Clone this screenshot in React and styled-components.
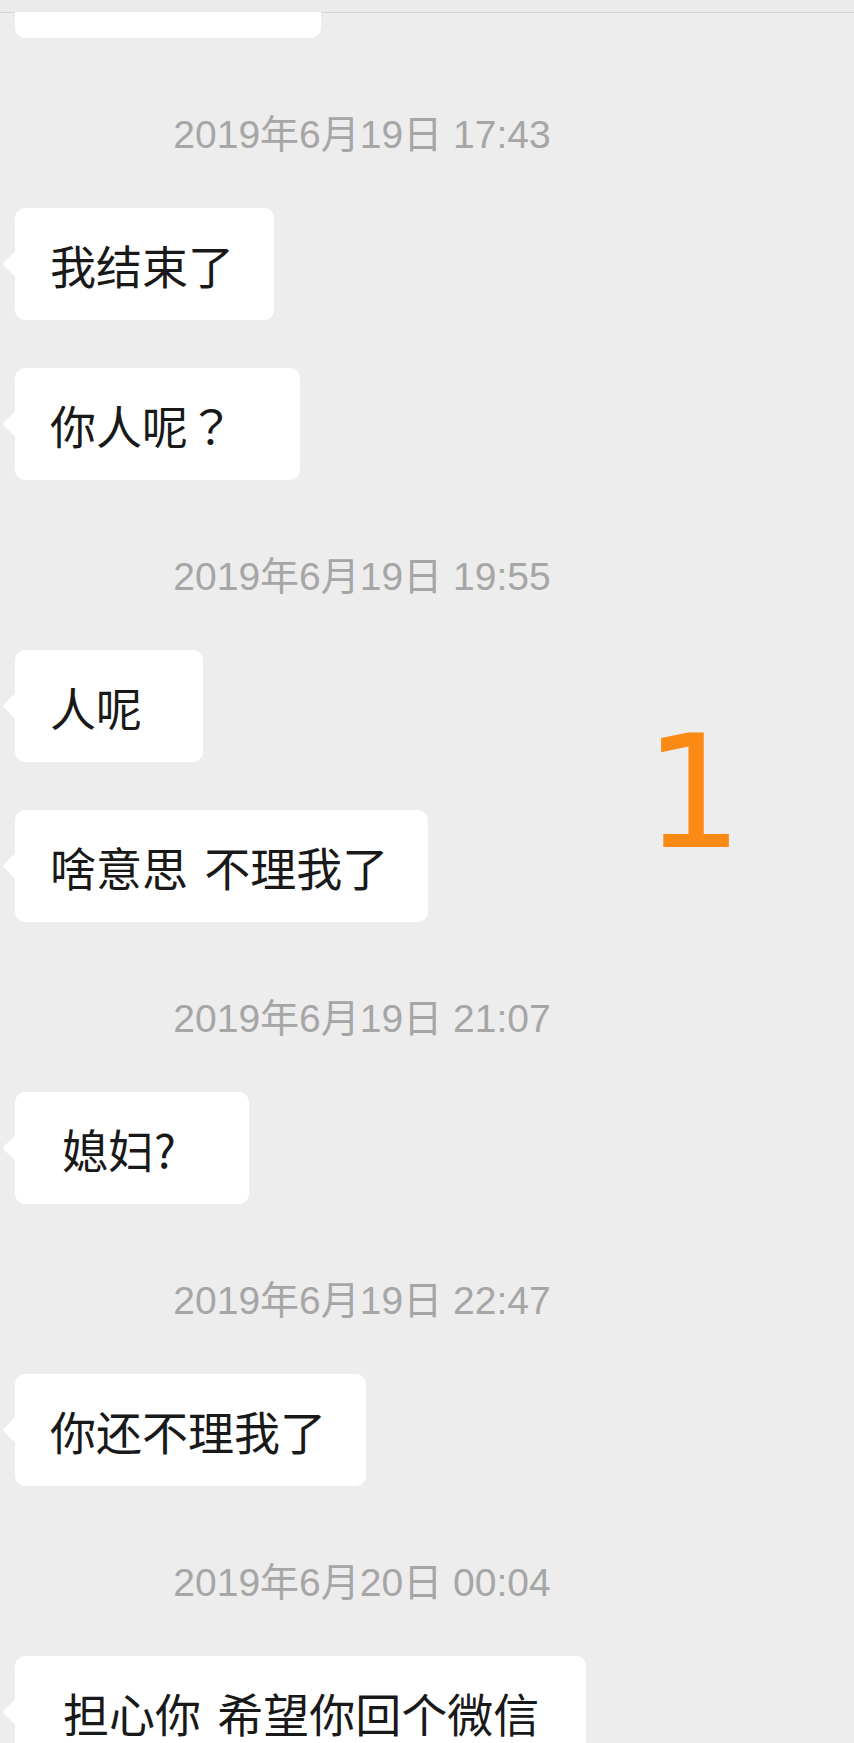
import styled, { createGlobalStyle } from 'styled-components';

const GlobalStyle = createGlobalStyle`
    html, body {
        margin: 0;
        padding: 0;
        background: #ededed;
    }
    body {
        height: 1743px;
        overflow: hidden;
    }
`;

const Page = styled.div`
    position: relative;
    width: 854px;
    height: 1743px;
    overflow: hidden;
    background-color: #ededed;
    font-family: "Noto Sans CJK SC", "Noto Sans", sans-serif;
`;

const TopStrip = styled.div`
    height: 12px;
    background-color: #eaeaea;
    border-bottom: 1px solid #d3d3d3;
`;

const Chat = styled.div`
    display: flex;
    flex-direction: column;
    align-items: flex-start;
`;

const CutBubble = styled.div`
    width: 306px;
    height: 26px;
    margin-left: 15px;
    margin-top: -1px;
    background-color: #fff;
    border-radius: 0 0 10px 10px;
`;

const Time = styled.div`
    align-self: stretch;
    height: 40px;
    line-height: 40px;
    margin: 77px 0 53px;
    padding-right: 130px;
    text-align: center;
    font-family: "Liberation Sans", "Noto Sans CJK SC", sans-serif;
    font-size: 39px;
    color: #a6a6a6;
    white-space: nowrap;
`;

const Bubble = styled.div`
    position: relative;
    box-sizing: border-box;
    height: 112px;
    line-height: 112px;
    min-width: ${p => p.$min || 0}px;
    margin-left: 15px;
    padding: 0 40px 0 ${p => p.$indent || 35}px;
    background-color: #fff;
    border-radius: 10px;
    font-size: 46px;
    color: #191919;
    white-space: nowrap;
    word-spacing: 6px;

    & + & {
        margin-top: 48px;
    }

    &::before {
        content: "";
        position: absolute;
        left: -9px;
        top: 47px;
        width: 18px;
        height: 18px;
        background-color: #fff;
        border-radius: 3px;
        transform: rotate(45deg);
    }
`;

const Punct = styled.span`
    font-family: "Noto Sans CJK TC", "Noto Sans CJK SC", sans-serif;
`;

const Mark = styled.div`
    position: absolute;
    left: 644px;
    top: 715px;
    font-family: "DejaVu Sans", sans-serif;
    font-size: 156px;
    line-height: 1;
    color: #fa8a14;
`;

const messages = [
    { time: '2019年6月19日 17:43' },
    { text: '我结束了' },
    { text: '你人呢', punct: '？', min: 285 },
    { time: '2019年6月19日 19:55' },
    { text: '人呢', min: 188 },
    { text: '啥意思 不理我了' },
    { time: '2019年6月19日 21:07' },
    { text: '媳妇?', min: 234, indent: 47 },
    { time: '2019年6月19日 22:47' },
    { text: '你还不理我了' },
    { time: '2019年6月20日 00:04' },
    { text: '担心你 希望你回个微信', min: 571, indent: 48 },
];

export default function App() {
    return (
        <Page>
            <GlobalStyle />
            <TopStrip />
            <Chat>
                <CutBubble />
                {messages.map((m, i) =>
                    m.time
                        ? <Time key={i}>{m.time}</Time>
                        : (
                            <Bubble key={i} $min={m.min} $indent={m.indent}>
                                {m.text}
                                {m.punct && <Punct>{m.punct}</Punct>}
                            </Bubble>
                        )
                )}
            </Chat>
            <Mark>1</Mark>
        </Page>
    );
}
